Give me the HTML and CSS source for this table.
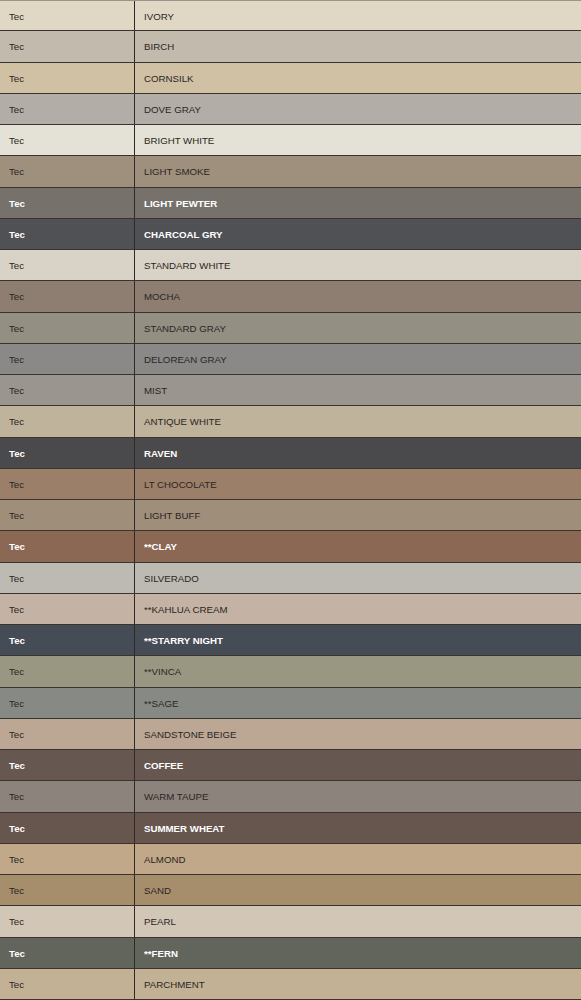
FILE: index.html
```html
<!DOCTYPE html>
<html>
<head>
<meta charset="utf-8">
<link rel="stylesheet" href="styles.css">
</head>
<body>
<div class="table">
  <div class="row" style="background:#e0d8c5"><div class="c1">Tec</div><div class="c2">IVORY</div></div>
  <div class="row" style="background:#c2baad"><div class="c1">Tec</div><div class="c2">BIRCH</div></div>
  <div class="row" style="background:#d0c0a4"><div class="c1">Tec</div><div class="c2">CORNSILK</div></div>
  <div class="row" style="background:#b2aea7"><div class="c1">Tec</div><div class="c2">DOVE GRAY</div></div>
  <div class="row" style="background:#e4e1d6"><div class="c1">Tec</div><div class="c2">BRIGHT WHITE</div></div>
  <div class="row" style="background:#9f907e"><div class="c1">Tec</div><div class="c2">LIGHT SMOKE</div></div>
  <div class="row dark" style="background:#76726b"><div class="c1">Tec</div><div class="c2">LIGHT PEWTER</div></div>
  <div class="row dark" style="background:#505155"><div class="c1">Tec</div><div class="c2">CHARCOAL GRY</div></div>
  <div class="row" style="background:#d9d2c6"><div class="c1">Tec</div><div class="c2">STANDARD WHITE</div></div>
  <div class="row" style="background:#8d7e71"><div class="c1">Tec</div><div class="c2">MOCHA</div></div>
  <div class="row" style="background:#938f82"><div class="c1">Tec</div><div class="c2">STANDARD GRAY</div></div>
  <div class="row" style="background:#8b8987"><div class="c1">Tec</div><div class="c2">DELOREAN GRAY</div></div>
  <div class="row" style="background:#9a958e"><div class="c1">Tec</div><div class="c2">MIST</div></div>
  <div class="row" style="background:#bfb39c"><div class="c1">Tec</div><div class="c2">ANTIQUE WHITE</div></div>
  <div class="row dark" style="background:#4a4a4c"><div class="c1">Tec</div><div class="c2">RAVEN</div></div>
  <div class="row" style="background:#9c7f69"><div class="c1">Tec</div><div class="c2">LT CHOCOLATE</div></div>
  <div class="row" style="background:#9f8e79"><div class="c1">Tec</div><div class="c2">LIGHT BUFF</div></div>
  <div class="row dark" style="background:#8b6853"><div class="c1">Tec</div><div class="c2">**CLAY</div></div>
  <div class="row" style="background:#bdb9b3"><div class="c1">Tec</div><div class="c2">SILVERADO</div></div>
  <div class="row" style="background:#c4b3a4"><div class="c1">Tec</div><div class="c2">**KAHLUA CREAM</div></div>
  <div class="row dark" style="background:#464c56"><div class="c1">Tec</div><div class="c2">**STARRY NIGHT</div></div>
  <div class="row" style="background:#999782"><div class="c1">Tec</div><div class="c2">**VINCA</div></div>
  <div class="row" style="background:#878a84"><div class="c1">Tec</div><div class="c2">**SAGE</div></div>
  <div class="row" style="background:#bca794"><div class="c1">Tec</div><div class="c2">SANDSTONE BEIGE</div></div>
  <div class="row dark" style="background:#665850"><div class="c1">Tec</div><div class="c2">COFFEE</div></div>
  <div class="row" style="background:#8d837d"><div class="c1">Tec</div><div class="c2">WARM TAUPE</div></div>
  <div class="row dark" style="background:#66564e"><div class="c1">Tec</div><div class="c2">SUMMER WHEAT</div></div>
  <div class="row" style="background:#c0a889"><div class="c1">Tec</div><div class="c2">ALMOND</div></div>
  <div class="row" style="background:#a68e6d"><div class="c1">Tec</div><div class="c2">SAND</div></div>
  <div class="row" style="background:#d2c6b6"><div class="c1">Tec</div><div class="c2">PEARL</div></div>
  <div class="row dark" style="background:#62655c"><div class="c1">Tec</div><div class="c2">**FERN</div></div>
  <div class="row" style="background:#c3b196"><div class="c1">Tec</div><div class="c2">PARCHMENT</div></div>
</div>
</body>
</html>
```

FILE: styles.css
```css
html, body {
  margin: 0;
  padding: 0;
  background: #c3b196;
}
.table {
  width: 581px;
  border-top: 1px solid #9a948a;
  font-family: "Liberation Sans", Arial, sans-serif;
  font-size: 9.7px;
  color: #2a2622;
}
.row {
  display: grid;
  grid-template-columns: 135px 1fr;
  height: 31.25px;
  box-sizing: border-box;
  border-bottom: 1px solid #3a342f;
  align-items: center;
}
.table .row:first-child {
  height: 30.25px;
}
.c1 {
  padding-left: 9px;
  padding-top: 1px;
  height: 100%;
  box-sizing: border-box;
  display: flex;
  align-items: center;
  border-right: 1px solid #2e2a27;
}
.c2 {
  padding-left: 9px;
  padding-top: 1px;
}
.dark {
  color: #fff;
  font-weight: bold;
}
```
